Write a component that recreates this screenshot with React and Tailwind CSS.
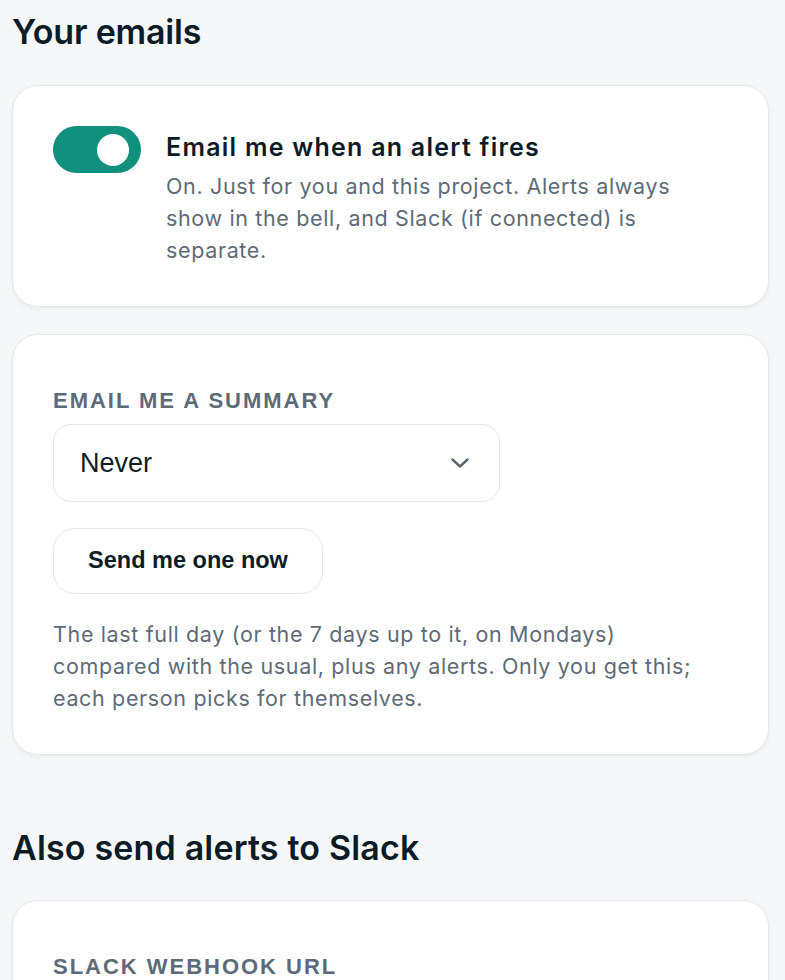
import React, { useState } from 'react';

// Notification preferences — personal email alerts, digest and Slack.
function Card({ children, className = '' }) {
  return (
    <div
      className={`w-[757px] rounded-[26px] border-[1.5px] border-[#e4e8eb] bg-white shadow-[0_2px_4px_rgba(15,30,40,0.05)] ${className}`}
    >
      {children}
    </div>
  );
}

function Toggle({ on, onChange }) {
  return (
    <button
      type="button"
      role="switch"
      aria-checked={on}
      onClick={() => onChange(!on)}
      className={`flex h-[47px] w-[88px] shrink-0 items-center rounded-full px-[12px] ${
        on ? 'justify-end bg-[#12907e]' : 'justify-start bg-[#cfd6db]'
      }`}
    >
      <span className="block h-[32px] w-[32px] rounded-full bg-white" />
    </button>
  );
}

function Label({ children }) {
  return (
    <div className="font-['Liberation_Sans',Arial,sans-serif] text-[22px] font-bold uppercase leading-[28px] tracking-[0.09em] text-[#5b6b78]">
      {children}
    </div>
  );
}

export default function App() {
  const [alertsOn, setAlertsOn] = useState(true);

  return (
    <div className="min-h-screen bg-[#f5f7f9] px-[12px] pt-[8px] font-['Inter',sans-serif] text-[#0b1c26]">
      <h2 className="text-[34px] font-semibold leading-[48px] tracking-[-0.005em]">Your emails</h2>

      <Card className="mt-[29px] px-[40px] pb-[40px] pt-[40px]">
        <div className="flex items-start gap-[25px]">
          <Toggle on={alertsOn} onChange={setAlertsOn} />
          <div className="min-w-0 flex-1">
            <div className="pt-[5px] text-[25px] font-semibold leading-[32px] tracking-[0.05em]">
              Email me when an alert fires
            </div>
            <p className="mt-[7px] text-[21.5px] leading-[32px] tracking-[0.03em] text-[#5e6b77]">
              On. Just for you and this project. Alerts always show in the bell, and Slack (if connected) is
              separate.
            </p>
          </div>
        </div>
      </Card>

      <Card className="mt-[27px] px-[40px] pb-[40px] pt-[52px]">
        <Label>Email me a summary</Label>
        <div className="mt-[9px] flex h-[78px] w-[447px] items-center justify-between rounded-[18px] border-[1.5px] border-[#e2e6e9] bg-white pl-[26px] pr-[30px]">
          <span className="font-['Liberation_Sans',Arial,sans-serif] text-[27px] text-[#0b1c26]">Never</span>
          <svg width="18" height="10" viewBox="0 0 18 10" fill="none" className="text-[#5b6670]">
            <path d="M1.5 1.5 9 8.5l7.5-7" stroke="currentColor" strokeWidth="2.4" strokeLinecap="round" strokeLinejoin="round" />
          </svg>
        </div>
        <button
          type="button"
          className="mt-[26px] h-[66px] w-[270px] rounded-[22px] border-[1.5px] border-[#e2e6e9] bg-white font-['Liberation_Sans',Arial,sans-serif] text-[23.5px] font-bold text-[#0b1c26]"
        >
          Send me one now
        </button>
        <p className="mt-[24px] max-w-[660px] text-[21.5px] leading-[32px] tracking-[0.03em] text-[#5e6b77]">
          The last full day (or the 7 days up to it, on Mondays) compared with the usual, plus any alerts. Only you get
          this; each person picks for themselves.
        </p>
      </Card>

      <h2 className="mt-[69px] text-[34px] font-semibold leading-[48px] tracking-[0.005em]">Also send alerts to Slack</h2>

      <Card className="mt-[28px] px-[40px] pb-[40px] pt-[52px]">
        <Label>Slack webhook URL</Label>
        <div className="mt-[9px] h-[78px] w-full rounded-[18px] border-[1.5px] border-[#e2e6e9] bg-white" />
      </Card>
    </div>
  );
}
